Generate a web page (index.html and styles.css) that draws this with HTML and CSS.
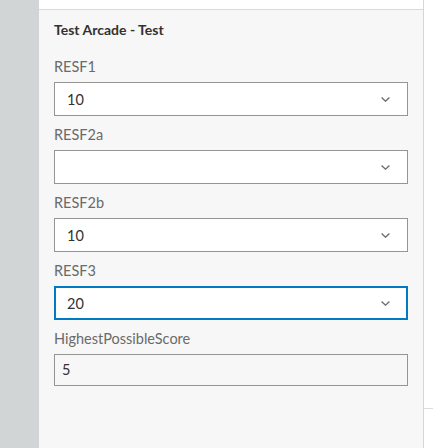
FILE: index.html
```html
<!DOCTYPE html>
<html>
<head>
<meta charset="utf-8">
<link rel="stylesheet" href="styles.css">
</head>
<body>
<div class="layout">
  <div class="sidebar"></div>
  <div class="panel">
    <div class="panel-top"></div>
    <div class="panel-body">
      <div class="heading">Test Arcade - Test</div>
      <div class="field">
        <div class="label">RESF1</div>
        <div class="select"><span class="value">10</span><svg class="chev" width="9" height="5" viewBox="0 0 9 5"><path d="M0.6 0.6 L4.5 4.2 L8.4 0.6" fill="none" stroke="#6b6b6b" stroke-width="1.3"/></svg></div>
      </div>
      <div class="field">
        <div class="label">RESF2a</div>
        <div class="select"><span class="value"></span><svg class="chev" width="9" height="5" viewBox="0 0 9 5"><path d="M0.6 0.6 L4.5 4.2 L8.4 0.6" fill="none" stroke="#6b6b6b" stroke-width="1.3"/></svg></div>
      </div>
      <div class="field">
        <div class="label">RESF2b</div>
        <div class="select"><span class="value">10</span><svg class="chev" width="9" height="5" viewBox="0 0 9 5"><path d="M0.6 0.6 L4.5 4.2 L8.4 0.6" fill="none" stroke="#6b6b6b" stroke-width="1.3"/></svg></div>
      </div>
      <div class="field">
        <div class="label">RESF3</div>
        <div class="select focused"><span class="value">20</span><svg class="chev" width="9" height="5" viewBox="0 0 9 5"><path d="M0.6 0.6 L4.5 4.2 L8.4 0.6" fill="none" stroke="#6b6b6b" stroke-width="1.3"/></svg></div>
      </div>
      <div class="field">
        <div class="label">HighestPossibleScore</div>
        <div class="readonly">5</div>
      </div>
    </div>
  </div>
  <div class="right">
    <div class="right-line"></div>
  </div>
</div>
</body>
</html>
```

FILE: styles.css
```css
html, body {
  margin: 0;
  padding: 0;
  height: 100%;
  background: #ffffff;
  font-family: Lato, "Open Sans", "Liberation Sans", sans-serif;
}

.layout {
  display: flex;
  height: 448px;
}

.sidebar {
  width: 39px;
  flex: none;
  background: #d1d5d5;
}

.panel {
  width: 384px;
  flex: none;
  border-right: 1px solid #d6d6d6;
  display: flex;
  flex-direction: column;
}

.panel-top {
  height: 9px;
  background: #ffffff;
  border-bottom: 1px solid #d9d9d9;
  flex: none;
}

.panel-body {
  flex: 1;
  background: #f7f7f7;
  padding: 10px 15px 0 15px;
}

.heading {
  font-size: 14px;
  font-weight: 700;
  line-height: 20px;
  color: #323232;
  margin-bottom: 17px;
}

.field {
  margin-bottom: 9px;
}

.label {
  font-size: 14.5px;
  line-height: 20px;
  color: #6a6a6a;
  margin-bottom: 5px;
}

.select {
  height: 34px;
  box-sizing: border-box;
  border: 1px solid #959595;
  background: #ffffff;
  display: flex;
  align-items: center;
  justify-content: space-between;
  padding: 0 17px 0 12px;
}

.select.focused {
  border: 2px solid #007ac2;
  padding: 0 16px 0 11px;
}

.value {
  font-size: 14.5px;
  color: #323232;
}

.chev {
  display: block;
}

.readonly {
  height: 32px;
  box-sizing: border-box;
  border: 1px solid #959595;
  background: #f7f7f7;
  font-size: 14.5px;
  color: #323232;
  line-height: 30px;
  padding-left: 7px;
}

.right {
  flex: 1;
  background: #ffffff;
  padding-top: 408px;
}

.right-line {
  height: 1px;
  background: #dcdcdc;
}
```
